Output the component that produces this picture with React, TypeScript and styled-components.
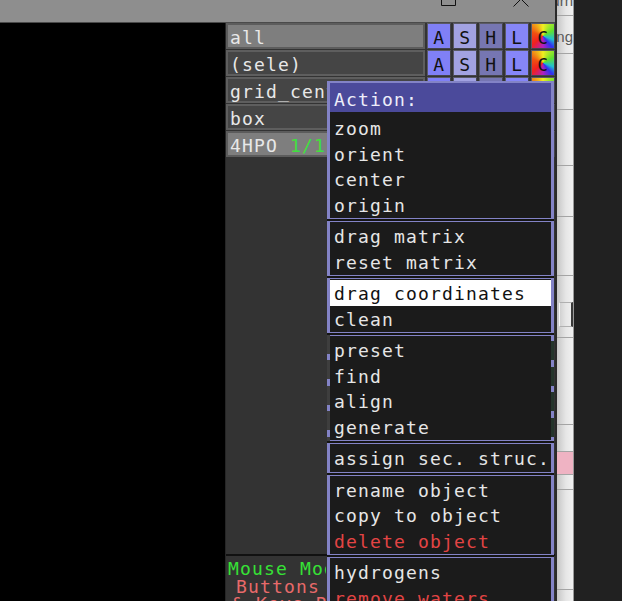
import React from 'react';
import styled, { createGlobalStyle, css } from 'styled-components';

const GlobalStyle = createGlobalStyle`
  html, body {
    margin: 0;
    padding: 0;
    background: #222222;
  }
  body {
    font-family: 'DejaVu Sans Mono', 'Liberation Mono', monospace;
  }
`;

const pixelFont = css`
  font-family: 'DejaVu Sans Mono', 'Liberation Mono', monospace;
  font-size: 18px;
  letter-spacing: 1.16px;
  white-space: pre;
`;

const PURPLE = '#8383c6';

const Screen = styled.div`
  display: flex;
  width: 622px;
  height: 601px;
  overflow: hidden;
  background: #212121;
`;

const PymolWindow = styled.div`
  display: flex;
  flex-direction: column;
  width: 555px;
  flex-shrink: 0;
  height: 100%;
`;

const TitleBar = styled.div`
  display: flex;
  justify-content: flex-end;
  align-items: flex-start;
  gap: 57px;
  height: 22px;
  padding-right: 26px;
  background: #8e8e8e;
  border-bottom: 1px solid #4a4a4a;
  overflow: hidden;
`;

const Body = styled.div`
  display: flex;
  flex: 1;
  min-height: 0;
`;

const Viewport = styled.div`
  width: 225px;
  flex-shrink: 0;
  background: #000000;
`;

const Panel = styled.div`
  position: relative;
  display: flex;
  flex-direction: column;
  flex: 1;
  background: #333333;
  border-left: 1px solid #262626;
  overflow: hidden;
`;

const ObjectList = styled.div`
  display: flex;
  flex-direction: column;
  gap: 1px;
`;

const ObjectRow = styled.div`
  display: grid;
  grid-template-columns: 199px repeat(5, 1fr);
  column-gap: 1.5px;
  height: 26px;
`;

const NameCell = styled.div<{ $lit?: boolean }>`
  ${pixelFont};
  box-sizing: border-box;
  height: 26px;
  padding: 0 0 0 2px;
  line-height: 25px;
  color: #e8e8e8;
  background: ${(p) => (p.$lit ? '#7e7e7e' : '#454545')};
  border: 2px solid ${(p) => (p.$lit ? '#5c5c5c' : '#5e5e5e')};
  overflow-x: clip;
  overflow-y: visible;
`;

const StateTag = styled.span`
  color: #3fe03f;
`;

const ToggleButton = styled.div<{ $bg: string }>`
  ${pixelFont};
  letter-spacing: 0;
  box-sizing: border-box;
  height: 26px;
  padding-top: 2px;
  display: flex;
  align-items: center;
  justify-content: center;
  color: #111111;
  background: ${(p) => p.$bg};
  border: 1px solid #44444c;
  border-top-color: #5a5a66;
  border-left-color: #5a5a66;
`;

const MouseBox = styled.div`
  ${pixelFont};
  margin-top: auto;
  height: 47px;
  padding-top: 4px;
  box-sizing: border-box;
  border-top: 2px solid #111111;
  line-height: 17.5px;
`;

const MouseLine = styled.div<{ $color: string; $indent?: number }>`
  width: 100px;
  box-sizing: border-box;
  overflow-x: clip;
  color: ${(p) => p.$color};
  padding-left: ${(p) => p.$indent ?? 2}px;
`;

const Menu = styled.div`
  position: absolute;
  top: 58px;
  left: 101px;
  width: 227px;
  display: flex;
  flex-direction: column;
  background: #141414;
`;

const MenuHeader = styled.div`
  ${pixelFont};
  box-sizing: border-box;
  height: 31px;
  padding: 6px 0 0 4px;
  line-height: 22px;
  color: #eeeefa;
  background: #4b4a9b;
  border: 2px solid ${PURPLE};
  border-left-width: 3px;
  border-right-width: 3px;
  border-bottom: none;
`;

const MenuGroup = styled.div<{ $first?: boolean; $broken?: boolean }>`
  position: relative;
  display: flex;
  flex-direction: column;
  margin-top: ${(p) => (p.$first ? 0 : 2)}px;
  padding: ${(p) => (p.$first ? 3 : 1)}px 0 1px;
  background: #1b1b1b;
  border: 1px solid ${PURPLE};
  border-left-width: 3px;
  border-right-width: 3px;
  border-top-width: ${(p) => (p.$first ? 0 : 1)}px;

  ${(p) =>
    p.$broken &&
    css`
      border-left-color: transparent;
      border-right-color: transparent;
      &::before,
      &::after {
        content: '';
        position: absolute;
        top: -1px;
        bottom: -1px;
        width: 3px;
      }
      &::before {
        left: -3px;
        background: repeating-linear-gradient(
          to bottom,
          #3e3e3e 0 19px,
          ${PURPLE} 19px 25.5px
        );
      }
      &::after {
        right: -3px;
        background: repeating-linear-gradient(
          to bottom,
          ${PURPLE} 0 6px,
          #24342b 6px 25.5px
        );
      }
    `}
`;

const MenuItem = styled.div<{ $active?: boolean; $danger?: boolean }>`
  ${pixelFont};
  height: 25.5px;
  line-height: 27px;
  padding-left: 4px;
  color: ${(p) => (p.$active ? '#111111' : p.$danger ? '#e24444' : '#e6e6e6')};
  background: ${(p) => (p.$active ? '#ffffff' : 'transparent')};
`;

const Divider = styled.div`
  width: 2px;
  flex-shrink: 0;
  background: #2a2a2a;
`;

const SideStrip = styled.div`
  display: flex;
  flex-direction: column;
  width: 16px;
  flex-shrink: 0;
  border-right: 1px solid #9a9a9a;
  background: linear-gradient(to right, #c6c6c6, #e6e6e6 55%, #f1f1f1);
  overflow: hidden;
`;

const StripCell = styled.div<{ $h: number; $pink?: boolean }>`
  display: flex;
  justify-content: flex-end;
  box-sizing: border-box;
  height: ${(p) => p.$h}px;
  flex-shrink: 0;
  border-bottom: 1px solid #a4a4a4;
  background: ${(p) => (p.$pink ? '#efb3c3' : 'transparent')};
  font-family: 'Liberation Sans', Arial, sans-serif;
  font-size: 15px;
  color: #5a5a5a;
  white-space: nowrap;
  overflow: hidden;
`;

const StripText = styled.span<{ $top: number }>`
  margin-top: ${(p) => p.$top}px;
  line-height: 16px;
`;

const StripControl = styled.div`
  margin-top: 26px;
  width: 11px;
  height: 23px;
  border: 1px solid #b0b0b0;
  border-right: 2px solid #3a3a3a;
  border-left-color: #f8f8f8;
`;

const Rest = styled.div`
  flex: 1;
  background: #212121;
`;

const rainbow =
  'conic-gradient(from 0deg, #f2ee20, #5ee030 60deg, #20c0d0 110deg, #3030f0 140deg, #b020c0 180deg, #f02020 230deg, #f05010 290deg, #f2ee20)';

const buttons = [
  { key: 'A', bg: '#8080f6' },
  { key: 'S', bg: '#a2a2e2' },
  { key: 'H', bg: '#7676b2' },
  { key: 'L', bg: '#8686f8' },
  { key: 'C', bg: rainbow },
];

const objects: { name: string; lit?: boolean; state?: string }[] = [
  { name: 'all', lit: true },
  { name: '(sele)' },
  { name: 'grid_center' },
  { name: 'box' },
  { name: '4HPO', lit: true, state: '1/1' },
];

type Entry = { label: string; active?: boolean; danger?: boolean };

const groups: { items: Entry[]; broken?: boolean }[] = [
  { items: [{ label: 'zoom' }, { label: 'orient' }, { label: 'center' }, { label: 'origin' }] },
  { items: [{ label: 'drag matrix' }, { label: 'reset matrix' }] },
  { items: [{ label: 'drag coordinates', active: true }, { label: 'clean' }] },
  {
    items: [{ label: 'preset' }, { label: 'find' }, { label: 'align' }, { label: 'generate' }],
    broken: true,
  },
  { items: [{ label: 'assign sec. struc.' }] },
  {
    items: [{ label: 'rename object' }, { label: 'copy to object' }, { label: 'delete object', danger: true }],
  },
  { items: [{ label: 'hydrogens' }, { label: 'remove waters', danger: true }, { label: 'state' }] },
];

const stripCells = [
  { h: 16, text: 'Return', top: -7 },
  { h: 38, text: 'Setting', top: 13 },
  { h: 56 },
  { h: 56 },
  { h: 51 },
  { h: 59 },
  { h: 62, control: true },
  { h: 87 },
  { h: 27 },
  { h: 23, pink: true },
  { h: 15 },
  { h: 100 },
  { h: 20 },
];

function MaximizeIcon() {
  return (
    <svg width="15" height="6" viewBox="0 0 15 6">
      <path d="M0.5 0 V5.5 H14.5 V0" fill="none" stroke="#111" strokeWidth="1" />
    </svg>
  );
}

function CloseIcon() {
  return (
    <svg width="16" height="7" viewBox="0 0 16 7">
      <path d="M0.5 6.5 L8 -1 L15.5 6.5" fill="none" stroke="#111" strokeWidth="1" />
    </svg>
  );
}

export default function App() {
  return (
    <>
      <GlobalStyle />
      <Screen>
        <PymolWindow>
          <TitleBar>
            <MaximizeIcon />
            <CloseIcon />
          </TitleBar>
          <Body>
            <Viewport />
            <Panel>
              <ObjectList>
                {objects.map((obj) => (
                  <ObjectRow key={obj.name}>
                    <NameCell $lit={obj.lit}>
                      {obj.name}
                      {obj.state && <StateTag> {obj.state}</StateTag>}
                    </NameCell>
                    {buttons.map((b) => (
                      <ToggleButton key={b.key} $bg={b.bg}>
                        {b.key}
                      </ToggleButton>
                    ))}
                  </ObjectRow>
                ))}
              </ObjectList>

              <MouseBox>
                <MouseLine $color="#36e236">Mouse Mode 3-Button Viewing</MouseLine>
                <MouseLine $color="#e86a6a" $indent={10}>
                  Buttons  L    M    R  Wheel
                </MouseLine>
                <MouseLine $color="#e86a6a" $indent={6}>
                  &amp; Keys Rota Move MovZ Slab
                </MouseLine>
              </MouseBox>

              <Menu>
                <MenuHeader>Action:</MenuHeader>
                {groups.map((g, i) => (
                  <MenuGroup key={i} $first={i === 0} $broken={g.broken}>
                    {g.items.map((it) => (
                      <MenuItem key={it.label} $active={it.active} $danger={it.danger}>
                        {it.label}
                      </MenuItem>
                    ))}
                  </MenuGroup>
                ))}
              </Menu>
            </Panel>
          </Body>
        </PymolWindow>
        <Divider />
        <SideStrip>
          {stripCells.map((c, i) => (
            <StripCell key={i} $h={c.h} $pink={c.pink}>
              {c.text && <StripText $top={c.top ?? 0}>{c.text}</StripText>}
              {c.control && <StripControl />}
            </StripCell>
          ))}
        </SideStrip>
        <Rest />
      </Screen>
    </>
  );
}
